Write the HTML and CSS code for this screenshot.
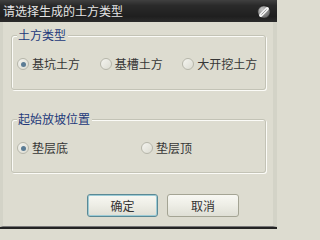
FILE: index.html
```html
<!DOCTYPE html>
<html lang="zh-CN">
<head>
<meta charset="utf-8">
<title>请选择生成的土方类型</title>
<link rel="stylesheet" href="styles.css">
</head>
<body>
<div class="window">
  <div class="titlebar">
    <span class="title">请选择生成的土方类型</span>
    <svg class="close" width="14" height="14" viewBox="0 0 14 14">
      <defs>
        <radialGradient id="cg" cx="0.35" cy="0.3" r="0.8">
          <stop offset="0" stop-color="#c8c8c8"/>
          <stop offset="1" stop-color="#5a5a5a"/>
        </radialGradient>
      </defs>
      <circle cx="7" cy="7" r="6.3" fill="url(#cg)" stroke="#1a1a1a" stroke-width="0.8"/>
      <line x1="10.2" y1="3.8" x2="3.8" y2="10.2" stroke="#f4f4f4" stroke-width="3.4" stroke-linecap="round"/>
      <line x1="9.6" y1="4.4" x2="4.4" y2="9.6" stroke="#8a8a8a" stroke-width="0.8"/>
    </svg>
  </div>
  <div class="content">
    <fieldset class="group first">
      <legend>土方类型</legend>
      <div class="options three">
        <label class="opt"><span class="radio checked"></span>基坑土方</label>
        <label class="opt"><span class="radio"></span>基槽土方</label>
        <label class="opt"><span class="radio"></span>大开挖土方</label>
      </div>
    </fieldset>
    <fieldset class="group second">
      <legend>起始放坡位置</legend>
      <div class="options two">
        <label class="opt"><span class="radio checked"></span>垫层底</label>
        <label class="opt"><span class="radio"></span>垫层顶</label>
      </div>
    </fieldset>
    <div class="buttons">
      <button class="btn default">确定</button>
      <button class="btn cancel">取消</button>
    </div>
  </div>
</div>
</body>
</html>
```
FILE: styles.css
```css
html, body {
  margin: 0;
  padding: 0;
}
html {
  background: #dddcd0;
}
body {
  width: 277px;
  height: 229px;
  overflow: hidden;
  background: #dddcd0;
  font-family: "Noto Sans CJK SC", "Noto Sans", sans-serif;
  font-size: 12px;
}
.window {
  width: 277px;
  height: 229px;
  display: flex;
  flex-direction: column;
  box-sizing: border-box;
  border-bottom: 2px solid #232323;
}
.titlebar {
  height: 22px;
  flex: 0 0 22px;
  display: flex;
  align-items: center;
  justify-content: space-between;
  padding: 0 6px 0 3px;
  background: linear-gradient(#404040, #2a2a2a 25%, #1f1f1f 75%, #2c2c2c);
  color: #e4e4e4;
  line-height: 14px;
}
.close {
  display: block;
  margin-top: 2px;
}
.content {
  flex: 1;
  display: flex;
  flex-direction: column;
  border-left: 3px solid #d3d3c7;
  border-right: 4px solid #d3d3c7;
  border-bottom: 1px solid #787878;
  padding: 0 7px 0 8px;
}
.group {
  margin: 6px 0 0;
  padding: 15px 0 18px 5px;
  min-width: 0;
  border: 1px solid #c3c3b6;
  border-radius: 3px;
  box-shadow: 1px 1px 0 #fbfbf7, inset 1px 1px 0 #fbfbf7;
}
.group.second {
  margin-top: 22px;
  padding-bottom: 17px;
}
.group legend {
  padding: 0 2px 0 1px;
  color: #23397a;
  line-height: 14px;
  background: #dddcd0;
}
.options {
  display: grid;
  line-height: 14px;
  color: #363636;
}
.three {
  grid-template-columns: repeat(3, 1fr);
}
.two {
  grid-template-columns: repeat(2, 1fr);
}
.opt {
  display: flex;
  align-items: center;
  gap: 3px;
  white-space: nowrap;
}
.radio {
  width: 12px;
  height: 12px;
  box-sizing: border-box;
  border-radius: 50%;
  border: 1px solid #b6b6aa;
  background: linear-gradient(135deg, #f4f4ef, #dcdcd2);
  display: flex;
  align-items: center;
  justify-content: center;
}
.radio.checked::after {
  content: "";
  width: 5px;
  height: 5px;
  border-radius: 50%;
  background: #5b7c95;
}
.buttons {
  display: flex;
  gap: 9px;
  margin-top: 21px;
  padding-left: 76px;
}
.btn {
  width: 71px;
  height: 23px;
  padding: 0;
  font: inherit;
  color: #333;
  border: 1px solid #a4a494;
  border-radius: 3px;
  background: linear-gradient(#f8f8f3, #edede5 50%, #dfdfd5);
}
.btn.cancel {
  width: 72px;
}
.btn.default {
  border-color: #5a8995;
  box-shadow: inset 0 0 0 1px #9ccbd6;
}
```
